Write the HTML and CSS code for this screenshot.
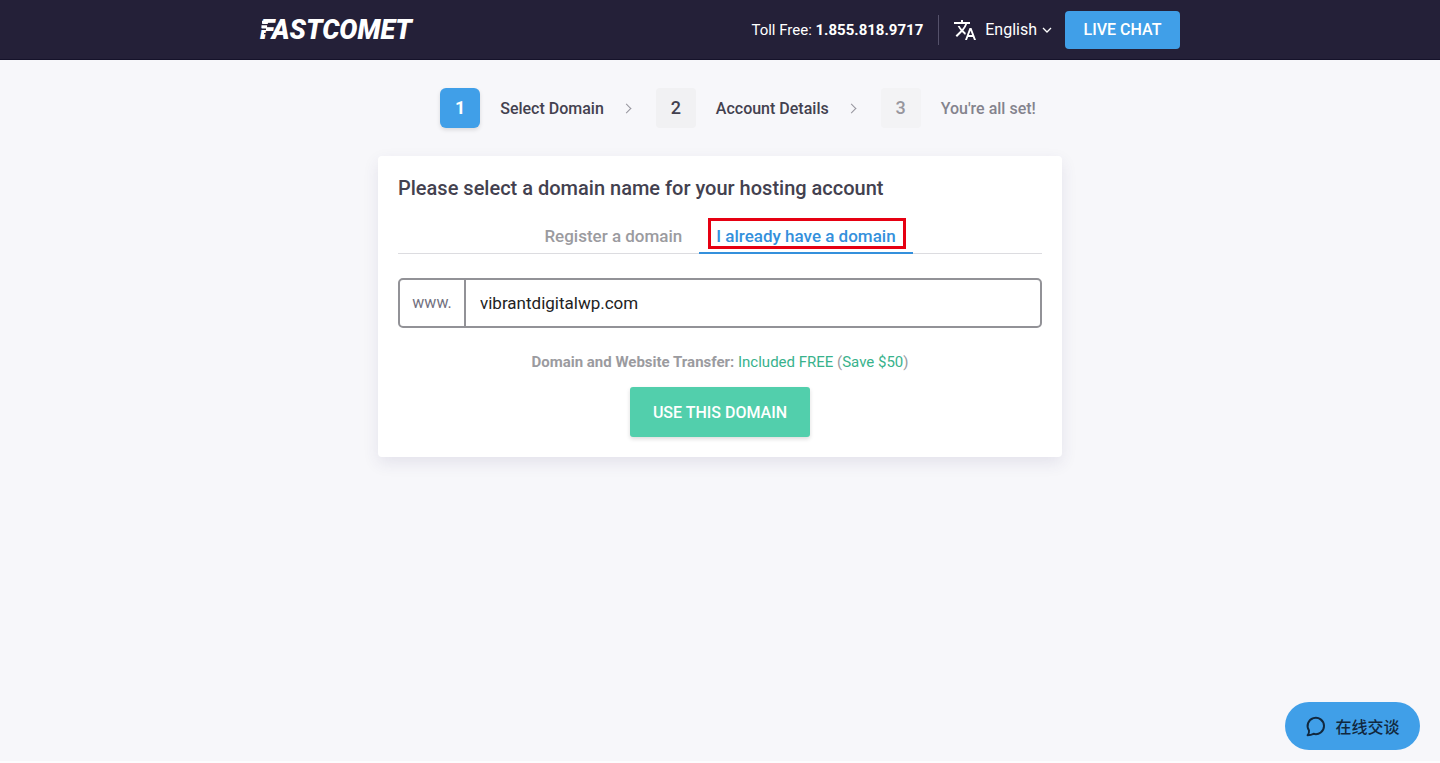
FILE: index.html
```html
<!DOCTYPE html>
<html lang="en">
<head>
    <meta charset="UTF-8">
    <meta name="viewport" content="width=device-width, initial-scale=1.0">
    <title>FastComet - Select Domain</title>
    <link rel="stylesheet" href="styles.css">
</head>
<body>
    <header class="header">
        <div class="header-inner">
            <a href="#" class="logo">FASTCOMET
                <svg class="logo-streaks" viewBox="0 0 24 24" aria-hidden="true">
                    <path d="M2 4.200H8M1.500 8.500H7" stroke="#fff" stroke-width="3"/>
                    <path d="M0 6.600H11M0 11.300H6M4 15.600H12" stroke="#242038" stroke-width="1.400"/>
                </svg>
            </a>
            <div class="header-nav">
                <div class="phone">Toll Free: <strong>1.855.818.9717</strong></div>
                <button type="button" class="language">
                    <svg class="icon-translate" viewBox="0 0 24 24" aria-hidden="true">
                        <path fill="currentColor" d="M12.870 15.070l-2.540-2.510.03-.03A17.520 17.520 0 0 0 14.070 6H17V4h-7V2H8v2H1v2h11.170C11.500 7.920 10.440 9.750 9 11.350 8.070 10.320 7.300 9.190 6.690 8h-2c.73 1.630 1.730 3.170 2.980 4.560l-5.090 5.020L4 19l5-5 3.110 3.110.76-2.040zM18.500 10h-2L12 22h2l1.120-3h4.750L21 22h2l-4.500-12zm-2.620 7l1.620-4.330L19.120 17h-3.240z"/>
                    </svg>
                    <span>English</span>
                    <svg class="icon-down" viewBox="0 0 10 6" aria-hidden="true">
                        <path d="M1 1l4 4 4-4" fill="none" stroke="currentColor" stroke-width="1.300"/>
                    </svg>
                </button>
                <button type="button" class="live-chat">LIVE CHAT</button>
            </div>
        </div>
    </header>

    <main class="main">
        <ol class="steps">
            <li class="step active"><span class="step-number">1</span>Select Domain</li>
            <li class="step"><span class="step-number">2</span>Account Details</li>
            <li class="step disabled"><span class="step-number">3</span>You're all set!</li>
        </ol>

        <form class="card">
            <h1>Please select a domain name for your hosting account</h1>
            <div class="tabs">
                <button type="button" class="tab">Register a domain</button>
                <button type="button" class="tab selected">I already have a domain</button>
            </div>
            <div class="domain-field">
                <label for="domain">www.</label>
                <input type="text" id="domain" value="vibrantdigitalwp.com">
            </div>
            <p class="transfer"><strong>Domain and Website Transfer:</strong> <span>Included FREE</span> (<span>Save $50</span>)</p>
            <button type="submit" class="submit">USE THIS DOMAIN</button>
        </form>
    </main>

    <button type="button" class="chat-widget" lang="zh">
        <svg viewBox="0 0 22 22" aria-hidden="true">
            <path d="M4 15.500A8.200 8.200 0 1 1 8.500 18.800Q6 20 2.600 20.200Q4.400 18.600 4 15.500" fill="none" stroke="currentColor" stroke-width="2" stroke-linejoin="round" stroke-linecap="round"/>
        </svg>
        在线交谈
    </button>
</body>
</html>
```
FILE: styles.css
```css
* {
    box-sizing: border-box;
}

body {
    margin: 0;
    min-height: 100vh;
    border-bottom: 2px solid #fdfdfe;
    background: #f7f7fa;
    color: #43414f;
    font-family: Roboto, "Noto Sans CJK SC", sans-serif;
    font-size: 16px;
}

button,
input {
    font: inherit;
}

button {
    border: none;
    padding: 0;
    background: none;
    cursor: pointer;
}

.header {
    background: #242038;
    border-bottom: 1px solid #15122a;
}

.header-inner {
    max-width: 920px;
    height: 59px;
    margin: 0 auto;
    display: flex;
    align-items: center;
    justify-content: space-between;
}

.logo {
    position: relative;
    color: #fff;
    font-size: 27px;
    font-weight: 900;
    font-style: italic;
    text-decoration: none;
}

.logo-streaks {
    position: absolute;
    left: 0;
    top: 4px;
    width: 24px;
    height: 24px;
}

.header-nav {
    display: flex;
    align-items: center;
    color: #fff;
}

.phone {
    padding-right: 15px;
    border-right: 1px solid #55516a;
    font-size: 15px;
    line-height: 30px;
}

.language {
    display: flex;
    align-items: center;
    padding: 0 13px 0 14px;
    color: #fff;
}

.icon-translate {
    width: 24px;
    height: 24px;
    margin-right: 8px;
}

.icon-down {
    width: 10px;
    height: 6px;
    margin-left: 5px;
}

.live-chat {
    width: 115px;
    height: 38px;
    border-radius: 4px;
    background: #409fe8;
    color: #fff;
    font-weight: 500;
}

.main {
    max-width: 684px;
    margin: 0 auto;
}

.steps {
    display: flex;
    justify-content: center;
    margin: 28px 0;
    padding: 0 0 0 36px;
    list-style: none;
    font-weight: 500;
}

.step {
    display: flex;
    align-items: center;
}

.step + .step::before {
    content: "";
    width: 6px;
    height: 6px;
    margin: 0 26px 0 19px;
    border: solid #96959d;
    border-width: 1px 1px 0 0;
    transform: rotate(45deg);
}

.step-number {
    width: 40px;
    margin-right: 20px;
    border-radius: 4px;
    background: #f1f1f3;
    font-size: 18px;
    line-height: 40px;
    text-align: center;
}

.step.active .step-number {
    border-radius: 6px;
    background: #409fe8;
    color: #fff;
    font-weight: 700;
    box-shadow: 0 2px 4px rgba(0, 0, 0, 0.12);
}

.step.disabled {
    color: #84838d;
}

.step.disabled .step-number {
    color: #97969d;
    background: #f3f3f5;
}

.card {
    padding: 20px;
    background: #fff;
    border-radius: 4px;
    box-shadow: 0 6px 16px rgba(60, 50, 110, 0.1);
    text-align: center;
}

.card h1 {
    margin: 0 0 16px;
    font-size: 20px;
    font-weight: 500;
    line-height: 24px;
    text-align: left;
}

.tabs {
    display: flex;
    justify-content: center;
    border-bottom: 1px solid #dcdce0;
}

.tab {
    position: relative;
    padding: 4px 17px 0;
    border-bottom: 2px solid transparent;
    margin-bottom: -1px;
    color: #9b9b9f;
    font-size: 17px;
    font-weight: 500;
    line-height: 32px;
}

.tab.selected {
    color: #3490dc;
    border-color: #3490dc;
}

/* highlight frame round the tab title */
.tab.selected::after {
    content: "";
    position: absolute;
    inset: 2px 7px 3px 9px;
    border: 3px solid #e60012;
}

.domain-field {
    display: flex;
    height: 50px;
    margin: 24px 0;
    border: 2px solid #929297;
    border-radius: 5px;
}

.domain-field label {
    width: 66px;
    border-right: 2px solid #929297;
    color: #737180;
    line-height: 46px;
}

.domain-field input {
    flex: 1;
    min-width: 0;
    border: none;
    padding: 0 14px;
    background: none;
    color: #222;
    font-size: 17px;
    outline: none;
}

.transfer {
    margin: 0 0 15px;
    color: #9b9b9f;
    font-size: 15px;
    line-height: 20px;
}

.transfer strong {
    font-weight: 700;
}

.transfer span {
    color: #38b28c;
}

.submit {
    width: 180px;
    height: 50px;
    border-radius: 3px;
    background: #52cfac;
    color: #fff;
    font-weight: 500;
    box-shadow: 0 2px 4px rgba(0, 0, 0, 0.14);
}

.chat-widget {
    position: fixed;
    right: 20px;
    bottom: 13px;
    display: flex;
    align-items: center;
    justify-content: center;
    gap: 8px;
    width: 135px;
    height: 48px;
    border-radius: 24px;
    background: #409fe8;
    color: #11283e;
    font-weight: 500;
}

.chat-widget svg {
    width: 22px;
    height: 22px;
}
```
